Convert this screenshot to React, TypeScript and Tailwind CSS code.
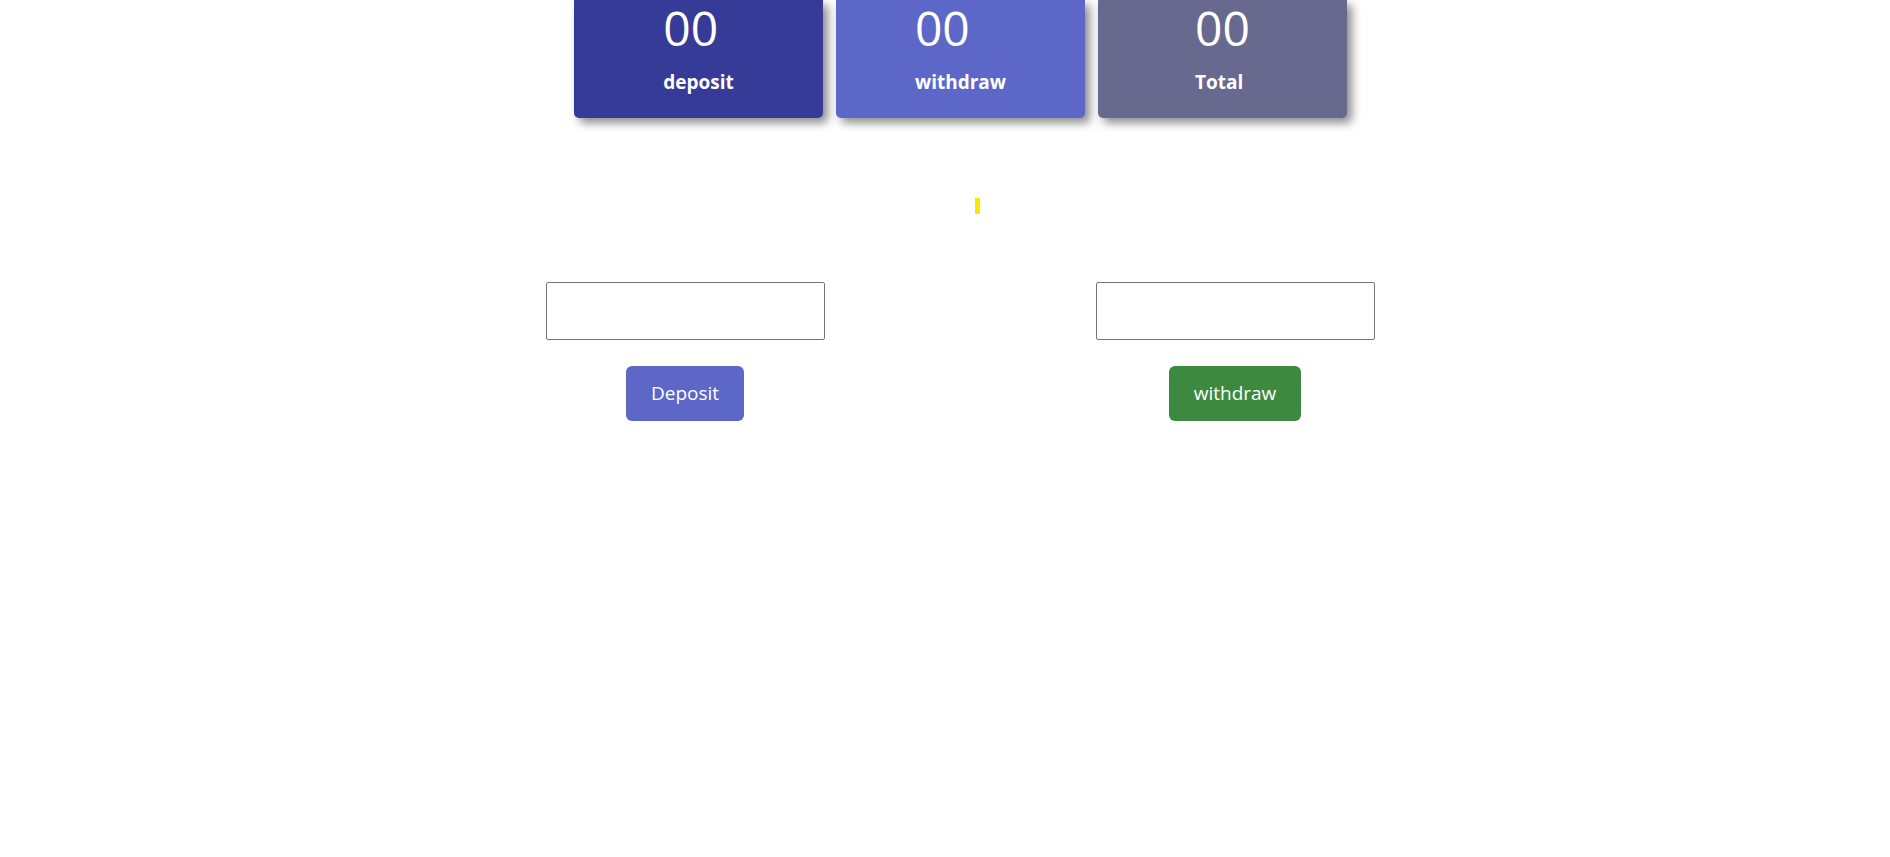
import React, { useState } from 'react';

const cards = [
  { label: 'deposit', bg: 'bg-[#353b96]' },
  { label: 'withdraw', bg: 'bg-[#5d67c8]' },
  { label: 'Total', bg: 'bg-[#67698e]' },
];

export default function App() {
  const [deposit, setDeposit] = useState('');
  const [withdraw, setWithdraw] = useState('');

  return (
    <main
      className="min-h-screen bg-white pl-[30px]"
      style={{ fontFamily: '"Open Sans", "Noto Sans", sans-serif' }}
    >
      {/* Summary cards */}
      <div className="flex justify-center gap-[13.5px] pl-[1px]">
        {cards.map((c) => (
          <div
            key={c.label}
            className={`${c.bg} w-[248.5px] h-[118px] rounded-b-[5px] shadow-[5px_5px_10px_rgba(0,0,0,0.45)] flex justify-center`}
          >
            <div className="flex flex-col items-start text-white">
              <div className="text-[48px] leading-[56px]">00</div>
              <div className="mt-[12px] text-[19px] leading-[28px] font-bold">{c.label}</div>
            </div>
          </div>
        ))}
      </div>

      {/* Yellow marker */}
      <div className="flex justify-center mt-[80px]">
        <div className="w-[5px] h-[16px] bg-[#ffe600] ml-[34px]" />
      </div>

      {/* Forms */}
      <div className="flex justify-center gap-[271px] mt-[68px]">
        <div className="flex flex-col items-center w-[279px]">
          <input
            value={deposit}
            onChange={(e) => setDeposit(e.target.value)}
            className="w-[279px] h-[58px] border border-[#767676] rounded-[2px] px-2 outline-none"
          />
          <button className="mt-[26px] h-[55px] px-[25px] rounded-[6px] bg-[#5d67c8] text-white text-[19px]">
            Deposit
          </button>
        </div>
        <div className="flex flex-col items-center w-[279px]">
          <input
            value={withdraw}
            onChange={(e) => setWithdraw(e.target.value)}
            className="w-[279px] h-[58px] border border-[#767676] rounded-[2px] px-2 outline-none"
          />
          <button className="mt-[26px] h-[55px] px-[25px] rounded-[6px] bg-[#3d8940] text-white text-[19px]">
            withdraw
          </button>
        </div>
      </div>
    </main>
  );
}
